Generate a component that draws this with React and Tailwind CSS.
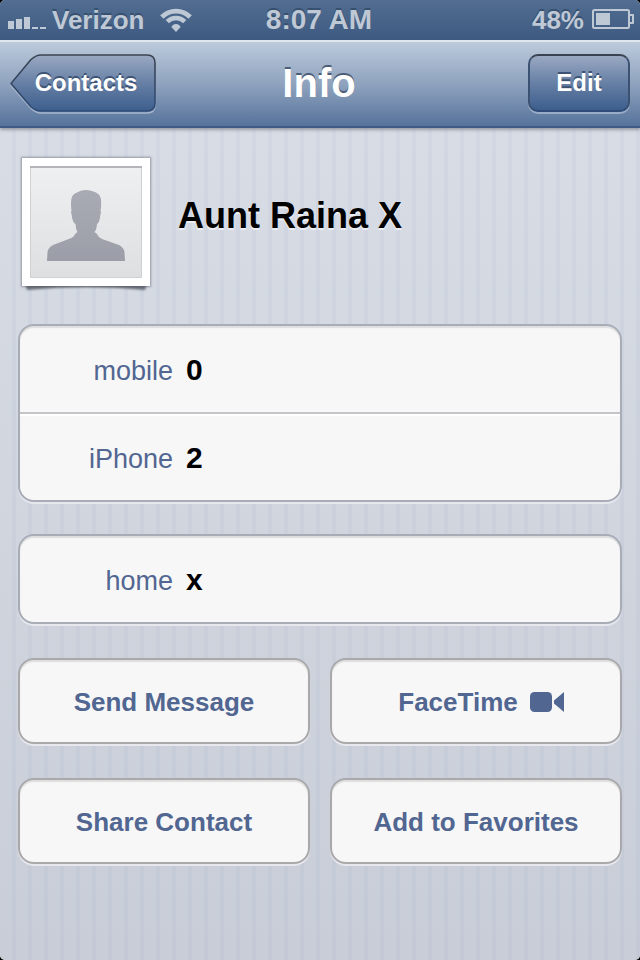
import clsx from 'clsx';

const phoneNumbers = [
  { label: 'mobile', value: '0' },
  { label: 'iPhone', value: '2' },
];

const addresses = [{ label: 'home', value: 'x' }];

function SignalIcon() {
  return (
    <svg width="38" height="14" viewBox="0 0 38 14" fill="currentColor" aria-hidden="true">
      <rect x="0" y="5" width="6" height="8" />
      <rect x="8" y="3" width="6" height="10" />
      <rect x="16" y="1" width="6" height="12" />
      <rect x="24" y="11" width="6" height="2" />
      <rect x="32" y="11" width="6" height="2" />
    </svg>
  );
}

function WifiIcon() {
  return (
    <svg width="32" height="24" viewBox="0 0 32 24" fill="none" aria-hidden="true">
      <path d="M1.800 9a20 20 0 0 1 28.400 0" stroke="currentColor" strokeWidth="4.800" />
      <path d="M7.300 13.600a12.400 12.400 0 0 1 17.400 0" stroke="currentColor" strokeWidth="4.600" />
      <path d="M16 24l-4.600-5q1.400-3 4.600-3t4.600 3z" fill="currentColor" />
    </svg>
  );
}

function BatteryIcon() {
  return (
    <svg width="42" height="20" viewBox="0 0 42 20" fill="none" aria-hidden="true">
      <rect x="1" y="1" width="36" height="18" rx="1.5" stroke="currentColor" strokeWidth="2" />
      <rect x="4" y="4" width="14" height="12" fill="currentColor" />
      <path d="M38 6h3v8h-3" stroke="currentColor" strokeWidth="2" strokeLinejoin="round" />
    </svg>
  );
}

function CameraIcon() {
  return (
    <svg width="34" height="20" viewBox="0 0 34 20" fill="currentColor" aria-hidden="true">
      <rect x="0" y="0" width="22" height="20" rx="4.5" />
      <path d="M34 0v20L24 11.500V8.500z" />
    </svg>
  );
}

function StatusBar() {
  return (
    <div className="grid h-10 grid-cols-[1fr_auto_1fr] items-center bg-linear-to-b from-[#526d91] to-[#3e5a81] pr-[6px] pl-2 text-[26px] leading-none font-bold text-[#bfc8d5] [text-shadow:0_-2px_0_#36506f]">
      <div className="flex items-center">
        <div className="pt-[6px]">
          <SignalIcon />
        </div>
        <span className="ml-[6px]">Verizon</span>
        <div className="ml-4">
          <WifiIcon />
        </div>
      </div>
      <time className="pr-1 text-[28px] leading-none">8:07 AM</time>
      <div className="flex items-center justify-end gap-2">
        <span>48%</span>
        <div className="pb-[2px]">
          <BatteryIcon />
        </div>
      </div>
    </div>
  );
}

function BackButton({ children }) {
  return (
    <button
      type="button"
      className="relative h-[60px] w-[146px] pb-[2px] pl-[6px] text-2xl font-bold text-white [text-shadow:0_-2px_0_#3d5374]"
    >
      <svg className="absolute inset-0" width="146" height="60" viewBox="0 0 146 60" aria-hidden="true">
        <defs>
          <linearGradient id="back-fill" x1="0" y1="0" x2="0" y2="1">
            <stop offset="0" stopColor="#9aa9c2" />
            <stop offset="0.5" stopColor="#6780a5" />
            <stop offset="1" stopColor="#3d5e8d" />
          </linearGradient>
          <linearGradient id="back-edge" x1="0" y1="0" x2="0" y2="1">
            <stop offset="0" stopColor="#3b4350" />
            <stop offset="1" stopColor="#2f4c78" />
          </linearGradient>
        </defs>
        <path
          d="M1 31.500L21 7Q26 2.500 31 2.500H137Q145 2.500 145 10.500V51Q145 59 137 59H31Q26 59 21 54.500Z"
          fill="none"
          stroke="#a5b5cc"
          strokeWidth="1.500"
        />
        <path
          d="M1 29.500L21 5.500Q26 1 31 1H137Q145 1 145 9V49Q145 57 137 57H31Q26 57 21 53Z"
          fill="url(#back-fill)"
          stroke="url(#back-edge)"
          strokeWidth="1.600"
          strokeLinejoin="round"
        />
      </svg>
      <span className="relative">{children}</span>
    </button>
  );
}

function NavBar() {
  return (
    <header className="relative grid h-[88px] grid-cols-[1fr_auto_1fr] items-center border-t-2 border-b-2 border-t-[#dfe6ee] border-b-[#3e5a85] bg-linear-to-b from-[#bccadb] via-[#8fa3be] to-[#56739b] px-[10px] shadow-[0_2px_3px_rgba(60,60,70,0.4)]">
      <div className="flex">
        <BackButton>Contacts</BackButton>
      </div>
      <h1 className="pr-[2px] pb-[2px] text-[40px] font-bold text-white [text-shadow:0_-2px_0_#4b5c76]">
        Info
      </h1>
      <div className="flex justify-end">
        <button
          type="button"
          className="mb-[2px] h-[58px] w-[102px] rounded-[10px] border-2 border-x-[#3c5273] border-t-[#3b4350] border-b-[#2f4c78] bg-linear-to-b from-[#9aa9c2] via-[#6780a5] to-[#3d5e8d] text-2xl font-bold text-white shadow-[0_2px_0_rgba(175,190,212,0.7)] [text-shadow:0_-2px_0_#3d5374]"
        >
          Edit
        </button>
      </div>
    </header>
  );
}

function Avatar() {
  return (
    <div className="relative">
      <svg className="absolute top-[120px] left-0" width="130" height="18" viewBox="0 0 130 18" aria-hidden="true">
        <defs>
          <filter id="lift" x="-10%" y="-50%" width="120%" height="200%">
            <feGaussianBlur stdDeviation="1.3" />
          </filter>
        </defs>
        <path d="M2 2H126L123 12Q65 6 5 12Z" fill="#6b7079" filter="url(#lift)" />
      </svg>
      <div className="relative bg-white p-2 shadow-[0_0_2px_1px_rgba(80,85,100,0.5)]">
        <svg
          className="block bg-linear-to-b from-[#eff0f2] to-[#dddfe0]"
          width="112"
          height="112"
          viewBox="0 0 112 112"
          role="img"
          aria-label="No photo"
        >
          <defs>
            <linearGradient id="person" x1="0" y1="0" x2="0" y2="1">
              <stop offset="0" stopColor="#a9abb4" />
              <stop offset="1" stopColor="#9b9ea8" />
            </linearGradient>
          </defs>
          <path d="M0.500 0V111.500H111.500V0" fill="none" stroke="#cfd0d2" />
          <path d="M0 1H112" stroke="#b4b5b8" strokeWidth="2" />
          <path
            d="M17 95L17.500 86Q18 82 23 79L40 72.500Q44 71 45 68L47.500 66Q46 64 45.500 58Q42.500 57 41.500 48Q40.500 46 41.500 45Q40 33 43 29Q45 27 47 26.500Q54 22.500 62 25Q70 27 71 33Q71.500 40 70.500 45Q71.500 46 70.500 48Q69.500 57 67 58Q66.500 64 64.500 66L67 68Q68 71 72 73L89 79Q94 82 94.500 86L95 95Z"
            fill="url(#person)"
          />
        </svg>
      </div>
    </div>
  );
}

function FieldGroup({ fields }) {
  return (
    <dl className="rounded-2xl border-2 border-[#a7acb6] bg-[#f7f7f7] shadow-[0_2px_0_#e6e8ed,inset_0_2px_1px_#dededf]">
      {fields.map((field, i) => (
        <div
          key={field.label}
          className={clsx(
            'flex h-[86px] items-center gap-[13px]',
            i > 0 && 'box-content border-t-2 border-[#c4c5c8] shadow-[inset_0_2px_0_#ffffff]'
          )}
        >
          <dt className="w-[153px] pt-1 text-right text-[27px] text-[#516691]">{field.label}</dt>
          <dd className="text-[30px] font-bold text-black">{field.value}</dd>
        </div>
      ))}
    </dl>
  );
}

function ActionButton({ children }) {
  return (
    <button
      type="button"
      className="flex h-[86px] items-center justify-center rounded-2xl border-2 border-[#a9a9ab] bg-[#f7f7f7] pt-[2px] text-[26px] font-bold text-[#516691] shadow-[0_2px_0_#e6e8ed,inset_0_2px_1px_#dededf]"
    >
      {children}
    </button>
  );
}

export default function App() {
  return (
    <div className="min-h-screen bg-black font-['Liberation_Sans',Arial,sans-serif]">
      <div className="flex min-h-screen flex-col overflow-hidden rounded-[5px] bg-[#d0d4de]">
        <StatusBar />
        <NavBar />
        <main className="flex-1 bg-[repeating-linear-gradient(90deg,transparent_0_12px,rgba(150,165,200,0.1)_12px_17px,transparent_17px_28px),linear-gradient(#d8dce5,#c9cdd7)] bg-size-[16px_100%] px-[18px] pt-[30px] pb-24">
          <section className="flex items-center gap-7 pl-1">
            <Avatar />
            <h2 className="pb-3 text-[36px] font-bold text-black [text-shadow:0_2px_0_#eceef3]">
              Aunt Raina X
            </h2>
          </section>
          <div className="mt-[38px] flex flex-col gap-8">
            <FieldGroup fields={phoneNumbers} />
            <FieldGroup fields={addresses} />
          </div>
          <div className="mt-[34px] grid grid-cols-2 gap-x-5 gap-y-[34px]">
            <ActionButton>Send Message</ActionButton>
            <ActionButton>
              <span className="flex items-center gap-3 pl-[10px]">
                FaceTime
                <CameraIcon />
              </span>
            </ActionButton>
            <ActionButton>Share Contact</ActionButton>
            <ActionButton>Add to Favorites</ActionButton>
          </div>
        </main>
      </div>
    </div>
  );
}
